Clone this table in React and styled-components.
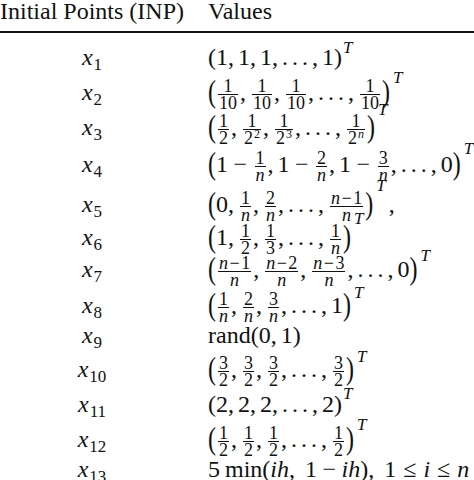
import React from "react";
import styled, { createGlobalStyle } from "styled-components";

const GlobalStyle = createGlobalStyle`
  html, body { margin: 0; padding: 0; background: #ffffff; }
  body { font-family: "Liberation Serif", "Times New Roman", serif; color: #111111; }
`;

const Table = styled.div`
  width: 474px;
  height: 480px;
  overflow: hidden;
  font-size: 24px;
`;

const HeaderRow = styled.div`
  display: grid;
  grid-template-columns: 184px 1fr;
  column-gap: 24px;
  height: 31px;
  line-height: 22px;
  border-bottom: 2px solid #111111;
  white-space: nowrap;
`;

const HeadCell = styled.div`
  text-align: left;
`;

const Body = styled.div`
  padding-top: 4px;
`;

const Row = styled.div`
  display: grid;
  grid-template-columns: 184px 1fr;
  column-gap: 24px;
  height: ${(p) => p.$h}px;
  line-height: 40px;
  white-space: nowrap;
`;

const LabelCell = styled.div`
  text-align: center;
`;

const ValueCell = styled.div`
  text-align: left;
`;

const Mi = styled.i`
  font-style: italic;
`;

const Sub = styled.span`
  font-size: 17px;
  line-height: 0;
  vertical-align: -5px;
  margin-left: 1px;
`;

const FracBox = styled.span`
  display: inline-flex;
  flex-direction: column;
  align-items: stretch;
  text-align: center;
  vertical-align: middle;
  font-size: 18px;
  line-height: 12px;
  padding: 0 2px;
`;

const Num = styled.span`
  display: block;
  padding: 0 1px 2px;
  border-bottom: 1px solid #111111;
`;

const Den = styled.span`
  display: block;
  padding: 2px 1px 0;
`;

const Pow = styled.span`
  font-size: 12px;
  line-height: 0;
  vertical-align: 6px;
  margin-left: 1px;
`;

const Delim = styled.span`
  display: inline-block;
  line-height: 24px;
  transform: scaleY(${(p) => (p.$big ? 1.3 : 1)});
  transform-origin: 50% 14px;
`;

const SupT = styled.i`
  font-style: italic;
  font-size: 17px;
  line-height: 0;
  vertical-align: ${(p) => p.$raise}px;
  margin-left: ${(p) => (p.$big ? 3 : 1)}px;
`;

const Comma = styled.span`
  margin-right: ${(p) => (p.$wide ? 10 : 4)}px;
`;

const Dots = styled.span`
  letter-spacing: 4px;
`;

const Bin = styled.span`
  margin: 0 5.5px;
`;

const SBin = styled.span`
  margin: 0 1.5px;
`;

const Rel = styled.span`
  margin: 0 7px;
`;

const Thin = styled.span`
  margin-right: 5px;
`;

const TrailComma = styled.span`
  margin-left: 3px;
`;

const F = ({ n, d }) => (
  <FracBox>
    <Num>{n}</Num>
    <Den>{d}</Den>
  </FracBox>
);

const N = () => <Mi>n</Mi>;
const C = () => <Comma>,</Comma>;
const D = () => (
  <>
    <Dots>...</Dots>
    <C />
  </>
);

const Label = ({ i }) => (
  <LabelCell>
    <Mi>x</Mi>
    <Sub>{i}</Sub>
  </LabelCell>
);

const nm = (k) => (
  <>
    <N />
    <SBin>−</SBin>
    {k}
  </>
);

const L = () => <Delim $big>(</Delim>;
const R = () => <Delim $big>)</Delim>;

const rows = [
  {
    h: 35,
    v: (
      <>
        <Delim>(</Delim>1<C />1<C />1<C />
        <D />1<Delim>)</Delim>
        <SupT $raise={12}>T</SupT>
      </>
    ),
  },
  {
    h: 35,
    v: (
      <>
        <L />
        <F n="1" d="10" />
        <C />
        <F n="1" d="10" />
        <C />
        <F n="1" d="10" />
        <C />
        <D />
        <F n="1" d="10" />
        <R />
        <SupT $big $raise={17}>T</SupT>
      </>
    ),
  },
  {
    h: 37,
    v: (
      <>
        <L />
        <F n="1" d="2" />
        <C />
        <F n="1" d={<>2<Pow>2</Pow></>} />
        <C />
        <F n="1" d={<>2<Pow>3</Pow></>} />
        <C />
        <D />
        <F n="1" d={<>2<Pow><Mi>n</Mi></Pow></>} />
        <R />
        <SupT $big $raise={20}>T</SupT>
      </>
    ),
  },
  {
    h: 40,
    v: (
      <>
        <L />1<Bin>−</Bin>
        <F n="1" d={<N />} />
        <C />1<Bin>−</Bin>
        <F n="2" d={<N />} />
        <C />1<Bin>−</Bin>
        <F n="3" d={<N />} />
        <C />
        <D />0<R />
        <SupT $big $raise={18}>T</SupT>
      </>
    ),
  },
  {
    h: 33,
    v: (
      <>
        <L />0<C />
        <F n="1" d={<N />} />
        <C />
        <F n="2" d={<N />} />
        <C />
        <D />
        <F n={nm("1")} d={<N />} />
        <R />
        <SupT $big $raise={21}>T</SupT>
        <TrailComma>,</TrailComma>
      </>
    ),
  },
  {
    h: 32,
    v: (
      <>
        <L />1<C />
        <F n="1" d="2" />
        <C />
        <F n="1" d="3" />
        <C />
        <D />
        <F n="1" d={<N />} />
        <R />
        <SupT $big $raise={21}>T</SupT>
      </>
    ),
  },
  {
    h: 36,
    v: (
      <>
        <L />
        <F n={nm("1")} d={<N />} />
        <C />
        <F n={nm("2")} d={<N />} />
        <C />
        <F n={nm("3")} d={<N />} />
        <C />
        <D />0<R />
        <SupT $big $raise={16}>T</SupT>
      </>
    ),
  },
  {
    h: 30,
    v: (
      <>
        <L />
        <F n="1" d={<N />} />
        <C />
        <F n="2" d={<N />} />
        <C />
        <F n="3" d={<N />} />
        <C />
        <D />1<R />
        <SupT $big $raise={15}>T</SupT>
      </>
    ),
  },
  {
    h: 34,
    v: (
      <>
        rand<Delim>(</Delim>0<C />1<Delim>)</Delim>
      </>
    ),
  },
  {
    h: 35,
    v: (
      <>
        <L />
        <F n="3" d="2" />
        <C />
        <F n="3" d="2" />
        <C />
        <F n="3" d="2" />
        <C />
        <D />
        <F n="3" d="2" />
        <R />
        <SupT $big $raise={15}>T</SupT>
      </>
    ),
  },
  {
    h: 35,
    v: (
      <>
        <Delim>(</Delim>2<C />2<C />2<C />
        <D />2<Delim>)</Delim>
        <SupT $raise={13}>T</SupT>
      </>
    ),
  },
  {
    h: 30,
    v: (
      <>
        <L />
        <F n="1" d="2" />
        <C />
        <F n="1" d="2" />
        <C />
        <F n="1" d="2" />
        <C />
        <D />
        <F n="1" d="2" />
        <R />
        <SupT $big $raise={17}>T</SupT>
      </>
    ),
  },
  {
    h: 34,
    v: (
      <>
        <Thin>5</Thin>min<Delim>(</Delim>
        <Mi>ih</Mi>
        <Comma $wide>,</Comma>1<Bin>−</Bin>
        <Mi>ih</Mi>
        <Delim>)</Delim>
        <Comma $wide>,</Comma>1<Rel>≤</Rel>
        <Mi>i</Mi>
        <Rel>≤</Rel>
        <Mi>n</Mi>
      </>
    ),
  },
];

export default function App() {
  return (
    <>
      <GlobalStyle />
      <Table>
        <HeaderRow>
          <HeadCell>Initial Points (INP)</HeadCell>
          <HeadCell>Values</HeadCell>
        </HeaderRow>
        <Body>
          {rows.map((r, idx) => (
            <Row key={idx} $h={r.h}>
              <Label i={idx + 1} />
              <ValueCell>{r.v}</ValueCell>
            </Row>
          ))}
        </Body>
      </Table>
    </>
  );
}
